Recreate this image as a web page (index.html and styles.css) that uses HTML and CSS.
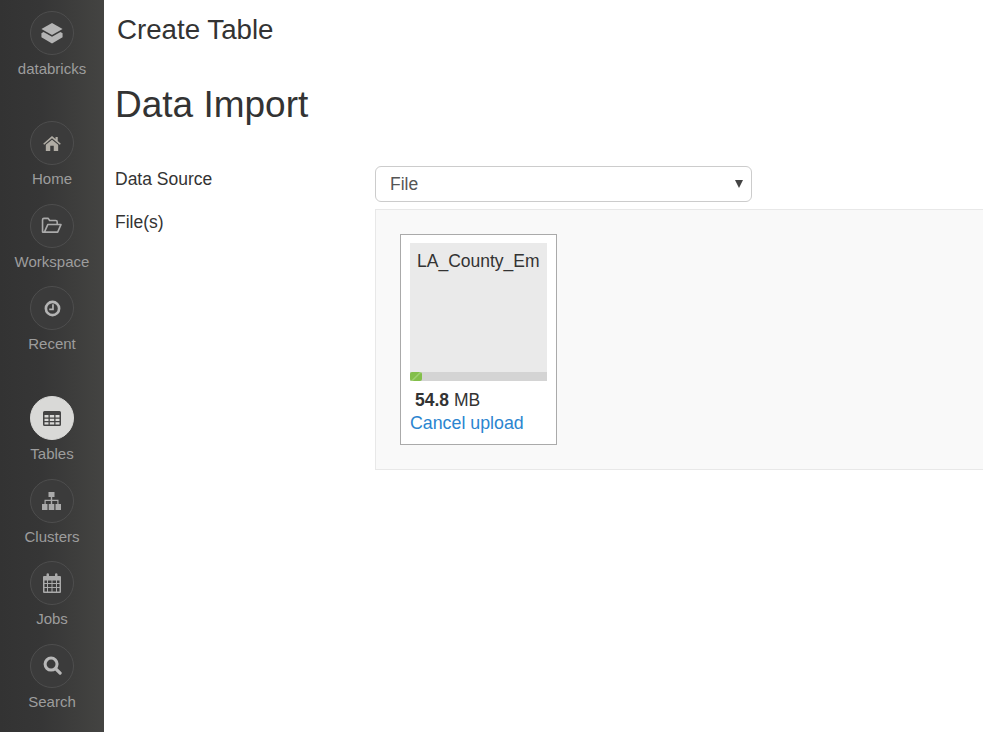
FILE: index.html
```html
<!DOCTYPE html>
<html lang="en">
<head>
    <meta charset="UTF-8">
    <meta name="viewport" content="width=device-width, initial-scale=1.0">
    <title>Create Table</title>
    <link rel="stylesheet" href="styles.css">
</head>
<body>
    <nav class="sidebar">
        <a class="nav-item logo">
            <span class="nav-icon">
                <svg width="24" height="23" viewBox="0 0 26 25"><path d="M13 1 L24.500 7.500 L13 14 L1.500 7.500 Z" fill="#b4b4b4"/><path d="M3.800 10.800 L13 16 L22.200 10.800 L24.500 12.200 L24.500 16.500 L13 23.500 L1.500 16.500 L1.500 12.200 Z" fill="#b4b4b4"/></svg>
            </span>
            <span class="nav-label">databricks</span>
        </a>
        <a class="nav-item">
            <span class="nav-icon">
                <svg width="18" height="15" viewBox="0 0 20 17"><path d="M10 0 L14 3.500 L14 1 L16.500 1 L16.500 5.700 L20 8.700 L18.800 10 L10 2.500 L1.200 10 L0 8.700 Z" fill="#b0aca4"/><path d="M10 4.200 L17 10 L17 17 L12 17 L12 11 L8 11 L8 17 L3 17 L3 10 Z" fill="#b0aca4"/></svg>
            </span>
            <span class="nav-label">Home</span>
        </a>
        <a class="nav-item">
            <span class="nav-icon">
                <svg width="22" height="17" viewBox="0 0 22 18"><path d="M3.500 16 L1 16 L1 3 Q1 1.500 2.500 1.500 L7 1.500 L8.500 3.700 L15 3.700 Q16.500 3.700 16.500 5.200 L16.500 7.500 M3 16 L6.500 8 L20.500 8 L17 16 Z" fill="none" stroke="#aaa" stroke-width="1.700" stroke-linejoin="round"/></svg>
            </span>
            <span class="nav-label">Workspace</span>
        </a>
        <a class="nav-item">
            <span class="nav-icon">
                <svg width="17" height="17" viewBox="0 0 18 18"><circle cx="9" cy="9" r="7" fill="none" stroke="#b4b4b4" stroke-width="2.800"/><path d="M9.500 4.500 L9.500 10 L5.500 10" fill="none" stroke="#b4b4b4" stroke-width="1.800"/></svg>
            </span>
            <span class="nav-label">Recent</span>
        </a>
        <a class="nav-item active">
            <span class="nav-icon">
                <svg width="18" height="15" viewBox="0 0 18 15"><path fill-rule="evenodd" d="M1.500 0 L16.500 0 Q18 0 18 1.500 L18 13.500 Q18 15 16.500 15 L1.500 15 Q0 15 0 13.500 L0 1.500 Q0 0 1.500 0 Z M1.500 4 L1.500 6.500 L5.500 6.500 L5.500 4 Z M6.800 4 L6.800 6.500 L11.200 6.500 L11.200 4 Z M12.500 4 L12.500 6.500 L16.500 6.500 L16.500 4 Z M1.500 7.700 L1.500 10 L5.500 10 L5.500 7.700 Z M6.800 7.700 L6.800 10 L11.200 10 L11.200 7.700 Z M12.500 7.700 L12.500 10 L16.500 10 L16.500 7.700 Z M1.500 11.200 L1.500 13.500 L5.500 13.500 L5.500 11.200 Z M6.800 11.200 L6.800 13.500 L11.200 13.500 L11.200 11.200 Z M12.500 11.200 L12.500 13.500 L16.500 13.500 L16.500 11.200 Z" fill="#444"/></svg>
            </span>
            <span class="nav-label">Tables</span>
        </a>
        <a class="nav-item">
            <span class="nav-icon">
                <svg width="21" height="18" viewBox="0 0 20 18"><path d="M7 0 H13 V5 H10.700 V7.700 H17 V12 H19.500 V18 H14 V12 H15.800 V9 H10.700 V12 H12.800 V18 H7.200 V12 H9.300 V9 H4.200 V12 H6 V18 H0.500 V12 H3 V7.700 H9.300 V5 H7 Z" fill="#aaa"/></svg>
            </span>
            <span class="nav-label">Clusters</span>
        </a>
        <a class="nav-item">
            <span class="nav-icon">
                <svg width="18" height="20" viewBox="0 0 18 20"><path fill-rule="evenodd" d="M1 3 H3.500 V1.500 Q3.500 0.300 4.800 0.300 Q6 0.300 6 1.500 V3 H12 V1.500 Q12 0.300 13.200 0.300 Q14.500 0.300 14.500 1.500 V3 H17 Q18 3 18 4 V19 Q18 20 17 20 H1 Q0 20 0 19 V4 Q0 3 1 3 Z M1.500 7.500 V10 H4 V7.500 Z M5 7.500 V10 H8.500 V7.500 Z M9.500 7.500 V10 H13 V7.500 Z M14 7.500 V10 H16.500 V7.500 Z M1.500 11 V14 H4 V11 Z M5 11 V14 H8.500 V11 Z M9.500 11 V14 H13 V11 Z M14 11 V14 H16.500 V11 Z M1.500 15 V18.500 H4 V15 Z M5 15 V18.500 H8.500 V15 Z M9.500 15 V18.500 H13 V15 Z M14 15 V18.500 H16.500 V15 Z" fill="#aaa"/></svg>
            </span>
            <span class="nav-label">Jobs</span>
        </a>
        <a class="nav-item">
            <span class="nav-icon">
                <svg width="19" height="19" viewBox="0 0 20 20"><circle cx="8.500" cy="8.500" r="6.300" fill="none" stroke="#b8b8b8" stroke-width="3.200"/><path d="M13.500 13.500 L18 18" stroke="#b8b8b8" stroke-width="3.400" stroke-linecap="round"/></svg>
            </span>
            <span class="nav-label">Search</span>
        </a>
    </nav>

    <main class="content">
        <div class="page-title">Create Table</div>
        <h1>Data Import</h1>

        <div class="form-row source-row">
            <label class="form-label" for="source">Data Source</label>
            <div class="select-wrap">
                <select id="source">
                    <option>File</option>
                </select>
            </div>
        </div>

        <div class="form-row">
            <div class="form-label">File(s)</div>
            <div class="dropzone">
                <div class="file-card">
                    <div class="file-preview">
                        <div class="file-name">LA_County_Employees.csv</div>
                        <div class="progress"><div class="progress-bar"></div></div>
                    </div>
                    <div class="file-size"><strong>54.8</strong> MB</div>
                    <a class="cancel-link">Cancel upload</a>
                </div>
            </div>
        </div>
    </main>
</body>
</html>
```

FILE: styles.css
```css
html, body {
    height: 100%;
}
body {
    font-family: "Liberation Sans", Arial, sans-serif;
    font-size: 17.5px;
    color: #333;
    background-color: #fff;
    margin: 0;
    padding: 0;
    display: flex;
    overflow: hidden;
}

/* left nav */
.sidebar {
    width: 104px;
    flex-shrink: 0;
    height: 732px;
    padding-top: 11px;
    box-sizing: border-box;
    background: linear-gradient(to right, #333 0%, #363636 40%, #444442 100%);
    display: flex;
    flex-direction: column;
    align-items: center;
}
.nav-item {
    display: flex;
    flex-direction: column;
    align-items: center;
    height: 82.5px;
    color: #9d9d9d;
    font-size: 15px;
}
.nav-item.logo {
    height: 110px;
}
.nav-item:nth-child(4) {
    height: 110px;
}
.nav-icon {
    width: 44px;
    height: 44px;
    box-sizing: border-box;
    border: 1px solid #4e4e4e;
    border-radius: 50%;
    background-color: #3b3b3b;
    display: flex;
    align-items: center;
    justify-content: center;
}
.nav-label {
    margin-top: 5px;
    line-height: 17px;
}
.nav-item.active .nav-icon {
    background-color: #d9d9d7;
    border-color: #d9d9d7;
}

/* main area */
.content {
    flex: 1;
    min-width: 0;
    padding-left: 11px;
}
.page-title {
    font-size: 27.7px;
    line-height: 30px;
    margin-top: 15px;
    margin-left: 2px;
}
h1 {
    font-size: 37px;
    font-weight: normal;
    line-height: 40px;
    margin: 40px 0 0 0;
}
.form-row {
    display: flex;
}
.source-row {
    margin-top: 41px;
    height: 43px;
}
.form-label {
    width: 260px;
    flex-shrink: 0;
    line-height: 26px;
}
.select-wrap {
    position: relative;
    width: 377px;
    height: 36px;
}
.select-wrap::after {
    content: "";
    position: absolute;
    right: 9px;
    top: 14px;
    border-left: 4px solid transparent;
    border-right: 4px solid transparent;
    border-top: 8px solid #444;
}
select {
    appearance: none;
    width: 100%;
    height: 36px;
    padding: 0 14px;
    font-family: inherit;
    font-size: 17.5px;
    color: #555;
    background-color: #fff;
    border: 1px solid #ccc;
    border-radius: 6px;
}
.dropzone {
    flex: 1;
    height: 261px;
    box-sizing: border-box;
    padding: 24px;
    background-color: #f9f9f9;
    border: 1px solid #e8e8e8;
    border-right: none;
}
.file-card {
    width: 157px;
    height: 211px;
    box-sizing: border-box;
    padding: 8px 9px;
    background-color: #fff;
    border: 1px solid #aaa;
}
.file-preview {
    position: relative;
    height: 138px;
    background-color: #eaeaea;
    overflow: hidden;
}
.file-name {
    margin: 7px 7px 0;
    line-height: 23px;
    white-space: nowrap;
    overflow: hidden;
}
.progress {
    position: absolute;
    left: 0;
    right: 0;
    bottom: 0;
    height: 9px;
    background-color: #d4d4d4;
}
.progress-bar {
    width: 12px;
    height: 100%;
    border-radius: 2px;
    background: linear-gradient(135deg, #83bf4a 0%, #83bf4a 45%, #a7d67c 50%, #83bf4a 60%);
}
.file-size {
    margin-top: 8px;
    padding-left: 5px;
    line-height: 23px;
}
.cancel-link {
    display: block;
    font-size: 17.8px;
    line-height: 23px;
    color: #2a85d0;
}
```
